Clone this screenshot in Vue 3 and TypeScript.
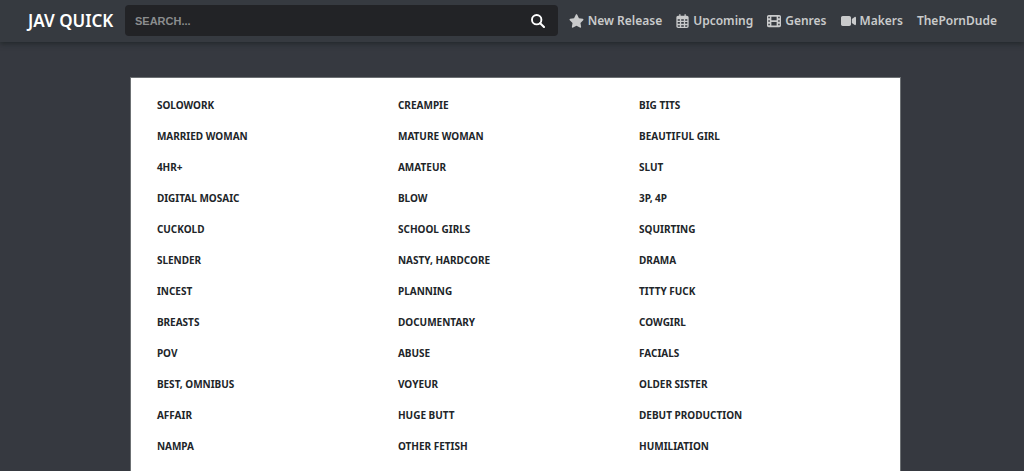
<script setup lang="ts">
import { ref } from 'vue'

interface NavItem {
  label: string
  viewBox?: string
  width?: number
  path?: string
}

const query = ref('')

const navItems: NavItem[] = [
  {
    label: 'New Release',
    viewBox: '0 0 576 512',
    width: 15,
    path: 'M259.3 17.8L194 150.2 47.900 171.500c-26.200 3.800-36.700 36.100-17.700 54.600l105.700 103-25 145.500c-4.500 26.300 23.200 46 46.400 33.700L288 439.600l130.700 68.700c23.200 12.200 50.900-7.400 46.400-33.700l-25-145.500 105.700-103c19-18.500 8.500-50.800-17.700-54.600L382 150.200 316.700 17.800c-11.700-23.600-45.600-23.900-57.400 0z',
  },
  {
    label: 'Upcoming',
    viewBox: '0 0 448 512',
    width: 13,
    path: 'M128 0c13 0 24 11 24 24v40h144V24c0-13 11-24 24-24s24 11 24 24v40h40c35 0 64 29 64 64v320c0 35-29 64-64 64H64c-35 0-64-29-64-64V128c0-35 29-64 64-64h40V24c0-13 11-24 24-24zM48 192v56h80v-56H48zm128 0v56h96v-56h-96zm144 0v56h80v-56h-80zM48 296v64h80v-64H48zm128 0v64h96v-64h-96zm144 0v64h80v-64h-80zM48 408v40c0 9 7 16 16 16h64v-56H48zm128 0v56h96v-56h-96zm144 0v56h64c9 0 16-7 16-16v-40h-80z',
  },
  {
    label: 'Genres',
    viewBox: '0 0 512 512',
    width: 14,
    path: 'M64 32h384c35 0 64 29 64 64v320c0 35-29 64-64 64H64c-35 0-64-29-64-64V96c0-35 29-64 64-64zM48 104v48h56v-48H48zm360 0v48h56v-48h-56zM48 232v48h56v-48H48zm360 0v48h56v-48h-56zM48 360v48h56v-48H48zm360 0v48h56v-48h-56zM160 96v128h192V96H160zm0 192v128h192V288H160z',
  },
  {
    label: 'Makers',
    viewBox: '0 0 576 512',
    width: 15,
    path: 'M64 64h256c35 0 64 29 64 64v256c0 35-29 64-64 64H64c-35 0-64-29-64-64V128c0-35 29-64 64-64zM559 100c10 5 17 16 17 28v256c0 27-30 40-50 27l-96-64-14-10V175l14-10 96-64c10-7 23-7 33-1z',
  },
  { label: 'ThePornDude' },
]

const genres: string[] = [
  'SOLOWORK', 'CREAMPIE', 'BIG TITS',
  'MARRIED WOMAN', 'MATURE WOMAN', 'BEAUTIFUL GIRL',
  '4HR+', 'AMATEUR', 'SLUT',
  'DIGITAL MOSAIC', 'BLOW', '3P, 4P',
  'CUCKOLD', 'SCHOOL GIRLS', 'SQUIRTING',
  'SLENDER', 'NASTY, HARDCORE', 'DRAMA',
  'INCEST', 'PLANNING', 'TITTY FUCK',
  'BREASTS', 'DOCUMENTARY', 'COWGIRL',
  'POV', 'ABUSE', 'FACIALS',
  'BEST, OMNIBUS', 'VOYEUR', 'OLDER SISTER',
  'AFFAIR', 'HUGE BUTT', 'DEBUT PRODUCTION',
  'NAMPA', 'OTHER FETISH', 'HUMILIATION',
]
</script>

<template>
  <div class="page">
    <header class="bar">
      <a class="brand" href="#">JAV QUICK</a>
      <form class="search" role="search" @submit.prevent>
        <input v-model="query" class="field" type="text" placeholder="SEARCH..." aria-label="Search" />
        <button class="go" type="submit" aria-label="Submit search">
          <svg viewBox="0 0 512 512" width="14" height="14" aria-hidden="true">
            <circle cx="208" cy="208" r="172" fill="none" stroke="currentColor" stroke-width="70" />
            <path d="M335 335L475 475" stroke="currentColor" stroke-width="74" stroke-linecap="round" />
          </svg>
        </button>
      </form>
      <nav class="nav">
        <a v-for="item in navItems" :key="item.label" class="link" href="#">
          <svg
            v-if="item.path"
            class="icon"
            :viewBox="item.viewBox"
            :width="item.width"
            height="14"
            aria-hidden="true"
          >
            <path :d="item.path" fill="currentColor" fill-rule="evenodd" />
          </svg>
          <span>{{ item.label }}</span>
        </a>
      </nav>
    </header>
    <main class="content">
      <ul class="genres">
        <li v-for="genre in genres" :key="genre">
          <a class="genre" href="#">{{ genre }}</a>
        </li>
      </ul>
    </main>
  </div>
</template>

<style>
body {
  background: #363940;
}
</style>

<style scoped>
.page {
  height: 100vh;
  display: flex;
  flex-direction: column;
  overflow: hidden;
  font-family: "Noto Sans", "Open Sans", sans-serif;
}

.bar {
  flex: none;
  display: flex;
  align-items: center;
  padding: 5px 27px 6px 28px;
  background: #363a40;
  box-shadow: 0 2px 5px rgba(20, 28, 26, 0.55);
}

.brand {
  flex: none;
  width: 97px;
  color: #fff;
  font-size: 17px;
  font-weight: 600;
  line-height: 24px;
  text-decoration: none;
  white-space: nowrap;
}

.search {
  flex: 1;
  min-width: 0;
  display: flex;
  height: 31px;
  border-radius: 4px;
  background: #222326;
}

.field {
  flex: 1;
  min-width: 0;
  padding: 0 10px;
  border: 0;
  outline: 0;
  background: transparent;
  color: #fff;
  font-family: "Liberation Sans", Arial, sans-serif;
  font-size: 11px;
  font-weight: 700;
}

.field::placeholder {
  color: #8b8d8e;
  opacity: 1;
}

.go {
  display: flex;
  align-items: center;
  justify-content: center;
  width: 40px;
  padding: 0;
  border: 0;
  background: transparent;
  color: #fff;
}

.nav {
  flex: none;
  display: flex;
  gap: 14px;
  padding-left: 11px;
}

.link {
  display: flex;
  align-items: center;
  gap: 4px;
  color: #c9cacb;
  font-size: 12px;
  font-weight: 600;
  line-height: 20px;
  text-decoration: none;
  white-space: nowrap;
}

.icon {
  flex: none;
}

.content {
  flex: 1 0 auto;
  margin: 35px 12% 0 calc(12% + 7px);
  padding: 12px 20px 12px 26px;
  border: 1px solid #6c7073;
  border-bottom: 0;
  background: #fff;
}

.genres {
  display: grid;
  grid-template-columns: repeat(3, 1fr);
  margin: 0;
  padding: 0;
  list-style: none;
}

.genre {
  display: block;
  color: #212529;
  font-size: 10px;
  font-weight: 700;
  line-height: 31px;
  text-decoration: none;
}
</style>
